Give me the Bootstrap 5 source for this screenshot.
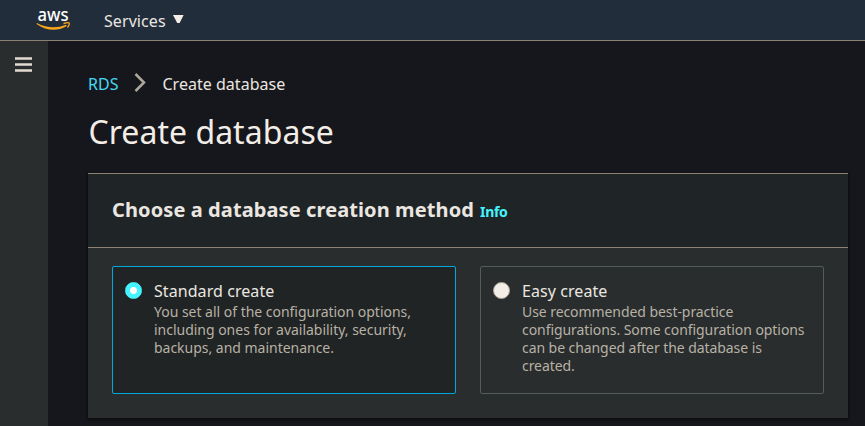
<!DOCTYPE html>
<html lang="en" data-bs-theme="dark">
<head>
<meta charset="utf-8">
<meta name="viewport" content="width=device-width, initial-scale=1">
<title>Create database</title>
<link href="https://cdn.jsdelivr.net/npm/bootstrap@5.3.0/dist/css/bootstrap.min.css" rel="stylesheet">
<style>
body{font-family:"Noto Sans",sans-serif;font-size:16px;background:#16171c;color:#ebe7e0;height:426px;overflow:hidden}
.topbar{height:41px;background:#212d3b;border-bottom:1px solid #8c8273;padding:0 0 0 36px}
.topbar svg{overflow:visible}
.services{margin-left:34px;line-height:22px;padding-top:2px;letter-spacing:.08px;color:#ebe7e0}
.services svg{margin:-3px 0 0 7px}
.rail{width:48px;background:#292d2e;padding:16px 0 0 15px}
.page-main{padding:32px 17px 0 40px}
.crumbs{line-height:22px;height:22px}
.crumbs a{color:#44d9f2}
.crumbs svg{margin:-3px 16px 0 16px}
.crumbs span{letter-spacing:.03px}
.page-title{font-size:32px;line-height:40px;font-weight:400;margin:17px 0 21px;padding-left:.5px;color:#f2eee7;letter-spacing:.03px}
.panel{background:#292d2e;border:0;border-top:1px solid #8c8273;border-radius:0;height:245px;box-shadow:0 1px 2px 1px #0c0d10;color:inherit}
.panel-head{background:#1f2427;border-bottom:1px solid #8c8273;border-radius:0!important;height:74px;padding:0 24px 2px}
.panel-head h2{font-size:20px;font-weight:700;line-height:26px;color:#ebe7e0;letter-spacing:.1px}
.panel-head a{font-size:14px;font-weight:700;color:#44f5ff;margin-left:6px;padding-top:4px;letter-spacing:-.3px}
.tiles{padding:18px 24px 0}
.tile{height:128px;border:1px solid #545b5d;border-radius:2px;padding:13px 12px}
.tile.picked{background:#202424;border-color:#00a8db}
.tile .form-check-input{width:17px;height:17px;margin:2px 0 0;background:#f2eee7;border:1px solid #aaa295}
.tile .form-check-input:checked{background:radial-gradient(circle,#fff 3px,#44f5ff 4px);border-color:#44f5ff}
.tile-title{font-size:16px;line-height:22px;padding-bottom:1px;letter-spacing:.07px;color:#ebe7e0}
.tile-text{font-size:14px;line-height:18px;color:#b8b1a5;letter-spacing:-.02px}
.tile:not(.picked) .tile-text{letter-spacing:-.07px}
</style>
<script src="https://cdn.jsdelivr.net/npm/bootstrap@5.3.0/dist/js/bootstrap.bundle.min.js" defer></script>
</head>
<body class="d-flex flex-column">
<header class="topbar navbar flex-nowrap justify-content-start flex-shrink-0">
  <a href="#" aria-label="AWS"><svg class="d-block" width="34" height="24" viewBox="0 0 34 24">
    <text x="1.500" y="12.500" font-family="Noto Sans" font-size="18.500" font-weight="500" textLength="31" lengthAdjust="spacingAndGlyphs" fill="#fff">aws</text>
    <path d="M.8 15Q16 22.700 30 16.700l.8 1.200Q16 26.500.5 15.900Z" fill="#f9a61a"/>
    <path d="M27.500 15.500q5-1.300 5.700-.5c.3 1-.3 3-1.700 4.500" fill="none" stroke="#f9a61a" stroke-width="1.400"/>
  </svg></a>
  <div class="services d-flex align-items-center">Services<svg width="11" height="9" viewBox="0 0 11 9"><path d="M0 0h10.600L6.600 8h-2.400Z" fill="#f2eee7"/></svg></div>
</header>
<div class="d-flex flex-grow-1">
  <aside class="rail flex-shrink-0"><svg class="d-block" width="17" height="15" viewBox="0 0 17 15"><path d="M0 1.500h17M0 7.500h17M0 13.500h17" stroke="#e2dcd2" stroke-width="2.500"/></svg></aside>
  <main class="page-main flex-grow-1">
    <nav class="crumbs d-flex align-items-center" aria-label="breadcrumb">
      <a href="#" class="text-decoration-none">RDS</a>
      <svg width="12" height="19" viewBox="0 0 12 19"><path d="M1.500 1l8.500 8.500L1.500 18" fill="none" stroke="#aea79b" stroke-width="2.500"/></svg>
      <span>Create database</span>
    </nav>
    <h1 class="page-title">Create database</h1>
    <section class="panel card">
      <div class="panel-head card-header d-flex align-items-center"><h2 class="m-0">Choose a database creation method</h2><a href="#" class="text-decoration-none">Info</a></div>
      <div class="tiles row row-cols-2 gx-4 m-0">
        <div class="col ps-0"><label class="tile picked d-flex align-items-start gap-2"><input class="form-check-input flex-shrink-0" type="radio" name="method" checked><span class="ps-1"><span class="tile-title d-block">Standard create</span><span class="tile-text d-block">You set all of the configuration options, including ones for availability, security, backups, and maintenance.</span></span></label></div>
        <div class="col pe-0"><label class="tile d-flex align-items-start gap-2"><input class="form-check-input flex-shrink-0" type="radio" name="method"><span class="ps-1"><span class="tile-title d-block">Easy create</span><span class="tile-text d-block">Use recommended best-practice configurations. Some configuration options can be changed after the database is created.</span></span></label></div>
      </div>
    </section>
  </main>
</div>
</body>
</html>
